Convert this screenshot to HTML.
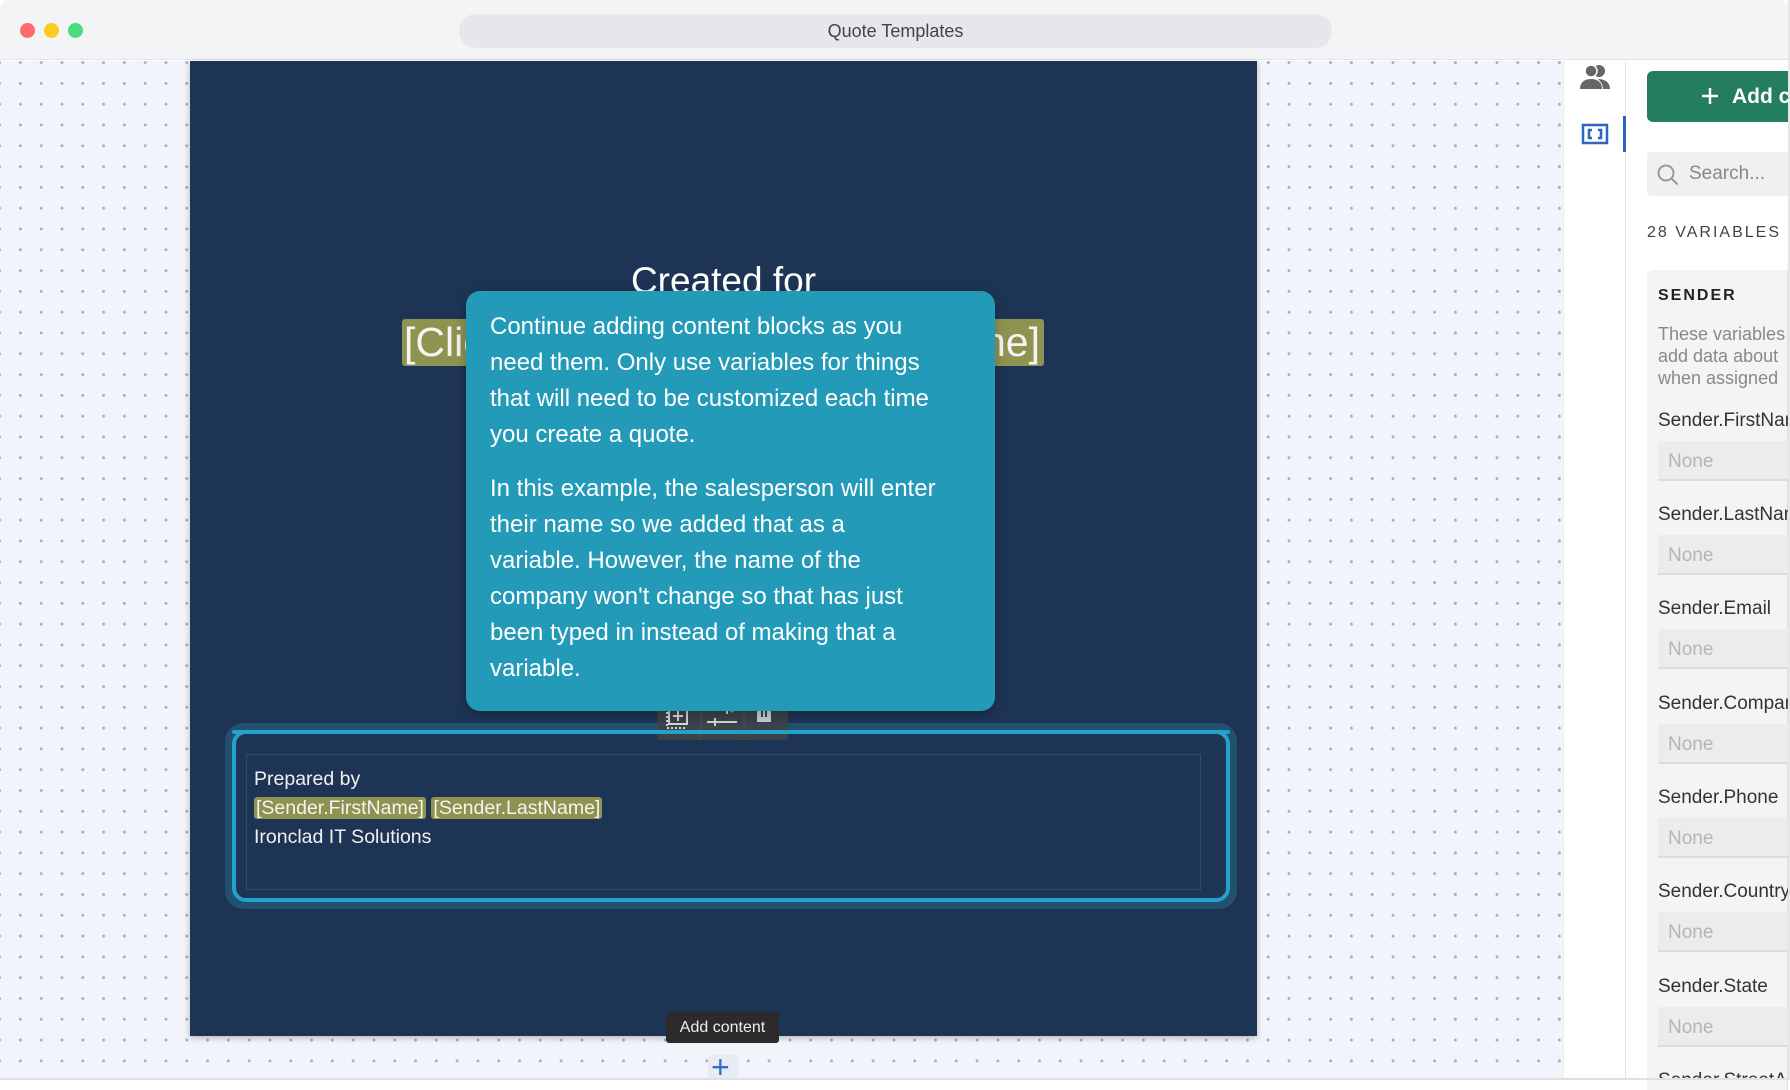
<!DOCTYPE html>
<html><head><meta charset="utf-8"><style>
*{box-sizing:border-box;margin:0;padding:0}
body{width:1790px;height:1080px;overflow:hidden;font-family:"Liberation Sans",sans-serif;background:#fff;position:relative}
.abs{position:absolute}
#top{left:0;top:0;width:1790px;height:60px;background:#f3f4f6;border-bottom:1px solid #e2e3e6;border-radius:10px 10px 0 0}
.tl{top:23px;width:15px;height:15px;border-radius:50%}
#pill{left:459px;top:14px;width:873px;height:34px;background:#e6e7ea;border-radius:17px;text-align:center;line-height:34px;font-size:18px;color:#444}
#canvas{left:0;top:61px;width:1563px;height:1019px;background-color:#f1f4fa;background-image:radial-gradient(circle,#a8acc0 1.3px,transparent 1.6px);background-size:20.8px 20.8px;background-position:10px 12px}
#page{left:190px;top:61px;width:1067px;height:975px;background:#1e3454;box-shadow:0 2px 6px rgba(0,0,0,.25)}
#tip{left:466px;top:291px;width:529px;height:420px;background:#229ab8;border-radius:14px;color:#fff;font-size:24px;line-height:36px;padding:18px 24px;box-shadow:0 4px 12px rgba(0,0,0,.25);white-space:nowrap}
#tip p{margin-bottom:18px}
.chip{background:#8f9350;color:#f4f4f4;border-radius:3px}
.side{left:1563px;top:61px;width:63px;height:1019px;background:#fff;border-right:1px solid #e6e6e6;border-left:1px solid #eceef2}
.lbl{left:1658px;font-size:19px;color:#333}
.inp{left:1658px;width:140px;height:40px;background:#ececec;border-bottom:2px solid #dcdcdc;font-size:19px;color:#b5b5b5;padding:10px 0 0 10px}
</style></head><body>
<div id="top" class="abs"></div>
<div class="abs tl" style="left:20px;background:#ff6b6b"></div>
<div class="abs tl" style="left:44px;background:#fdcb1d"></div>
<div class="abs tl" style="left:68px;background:#48dc7c"></div>
<div id="pill" class="abs">Quote Templates</div>
<div id="canvas" class="abs"></div>
<div id="page" class="abs"></div>
<div class="abs" style="left:190px;top:260px;width:1067px;text-align:center;color:#fff;font-size:37px">Created for</div>
<div class="abs chip" style="left:402px;top:319px;width:642px;height:47px;font-size:41px;line-height:47px;padding-left:2px">[Client.CompanyName]<span style="position:absolute;right:4px">ne]</span></div>
<div class="abs" style="left:225px;top:723px;width:1012px;height:186px;border-radius:18px;background:#22506e"></div>
<div class="abs" style="left:232px;top:730px;width:998px;height:172px;border-radius:14px;border:4px solid #23a3c9;background:#1e3454"></div>
<div class="abs" style="left:246px;top:754px;width:955px;height:136px;border:1px solid #2a4e66"></div>
<div class="abs" style="left:254px;top:765px;color:#f0f0f0;font-size:19.5px;line-height:29px">Prepared by<br><span class="chip" style="padding:0 2px">[Sender.FirstName]</span> <span class="chip" style="padding:0 2px">[Sender.LastName]</span><br>Ironclad IT Solutions</div>
<div class="abs" style="left:657px;top:702px;width:131px;height:38px;background:#3f4449;border-radius:3px;opacity:.9">
<svg width="131" height="38" viewBox="0 0 131 38" fill="none" stroke="#e6e6e6" stroke-width="2"><rect x="12" y="6" width="18" height="16"/><path d="M21 9v10M16 14h10"/><path d="M10 6v20M10 26h20" stroke-dasharray="2 2"/><path d="M50 8h30M50 20h30M70 4v8M58 16v8"/><rect x="100" y="4" width="14" height="16" fill="#cfe4ea" stroke="none"/><path d="M105 4v11M109 4v11" stroke="#3f4449"/><path d="M44 2v36M87 2v36" stroke="#555" stroke-width="1"/></svg></div>
<div class="abs" style="left:232px;top:730px;width:998px;height:4px;background:#23a3c9;border-radius:4px"></div>
<div id="tip" class="abs"><p>Continue adding content blocks as you<br>need them. Only use variables for things<br>that will need to be customized each time<br>you create a quote.</p><p>In this example, the salesperson will enter<br>their name so we added that as a<br>variable. However, the name of the<br>company won't change so that has just<br>been typed in instead of making that a<br>variable.</p></div>
<div class="abs" style="left:723px;top:704px;width:0;height:0;border-left:9px solid transparent;border-right:9px solid transparent;border-top:9px solid #229ab8"></div>
<div class="abs" style="left:666px;top:1012px;width:113px;height:31px;background:#2b2b2b;border-radius:3px;color:#eee;font-size:16px;text-align:center;line-height:31px">Add content</div>
<div class="abs" style="left:708px;top:1055px;width:30px;height:25px;background:#e8ebf3"></div>
<div class="abs" style="left:711px;top:1050px;color:#2f6ed0;font-size:32px;line-height:34px">+</div>
<div class="abs side"></div>
<svg class="abs" style="left:1578px;top:63px" width="34" height="30" viewBox="0 0 34 30"><circle cx="21" cy="8" r="6" fill="#666"/><circle cx="13" cy="8" r="6" fill="#666" stroke="#fff" stroke-width="1.5"/><path d="M2 26c0-7 5-10 11-10s11 3 11 10z" fill="#666"/><path d="M20 16c6 0 12 3 12 10h-7c0-4-2-7-5-10z" fill="#666"/></svg>
<svg class="abs" style="left:1581px;top:123px" width="28" height="22" viewBox="0 0 28 22" fill="none" stroke="#2f65c0" stroke-width="2.5"><rect x="2" y="2" width="24" height="18"/><path d="M11 7H8v8h3M17 7h3v8h-3"/></svg>
<div class="abs" style="left:1623px;top:116px;width:3px;height:36px;background:#2f65c0"></div>
<div class="abs" style="left:1647px;top:71px;width:150px;height:51px;background:#237d5e;border-radius:6px;color:#fff;font-size:21px;font-weight:bold;line-height:51px;padding-left:85px;white-space:nowrap;overflow:hidden">Add custom</div>
<svg class="abs" style="left:1701px;top:87px" width="18" height="18" viewBox="0 0 18 18" stroke="#fff" stroke-width="2.4"><path d="M9 1v16M1 9h16"/></svg>
<div class="abs" style="left:1647px;top:152px;width:160px;height:44px;background:#f0f0f0;border-radius:4px;color:#888;font-size:19px;line-height:44px;padding-left:42px">Search...</div>
<svg class="abs" style="left:1656px;top:163px" width="24" height="24" viewBox="0 0 24 24" fill="none" stroke="#999" stroke-width="2"><circle cx="10" cy="10" r="7.5"/><path d="M15.5 15.5l6 6"/></svg>
<div class="abs" style="left:1647px;top:224px;color:#444;font-size:16px;letter-spacing:2px;white-space:nowrap">28 VARIABLES SHOWN</div>
<div class="abs" style="left:1647px;top:270px;width:141px;height:820px;background:#f4f4f4;border-radius:6px 0 0 0;border-right:1px solid #e0e0e0"></div>
<div class="abs" style="left:1658px;top:287px;font-size:16px;font-weight:bold;letter-spacing:2px;color:#222">SENDER</div>
<div class="abs" style="left:1658px;top:323px;width:130px;overflow:hidden;white-space:nowrap;color:#888;font-size:18px;line-height:22px">These variables<br>add data about<br>when assigned</div>
<div class="abs" style="left:1647px;top:400px;width:141px;height:680px;overflow:hidden">
<div style="position:absolute;left:0;top:0;width:300px">
<div class="abs lbl" style="left:11px;top:10px">Sender.FirstName</div><div class="abs inp" style="left:11px;top:41px">None</div>
<div class="abs lbl" style="left:11px;top:104px">Sender.LastName</div><div class="abs inp" style="left:11px;top:135px">None</div>
<div class="abs lbl" style="left:11px;top:198px">Sender.Email</div><div class="abs inp" style="left:11px;top:229px">None</div>
<div class="abs lbl" style="left:11px;top:293px">Sender.Company</div><div class="abs inp" style="left:11px;top:324px">None</div>
<div class="abs lbl" style="left:11px;top:387px">Sender.Phone</div><div class="abs inp" style="left:11px;top:418px">None</div>
<div class="abs lbl" style="left:11px;top:481px">Sender.Country</div><div class="abs inp" style="left:11px;top:512px">None</div>
<div class="abs lbl" style="left:11px;top:576px">Sender.State</div><div class="abs inp" style="left:11px;top:607px">None</div>
<div class="abs lbl" style="left:11px;top:670px">Sender.StreetAddress</div>
</div></div>
<div class="abs" style="left:0;top:1078px;width:1790px;height:2px;background:#e0e0e0"></div>
<div class="abs" style="left:1788px;top:0;width:2px;height:1080px;background:#e6e6e6"></div>
</body></html>
